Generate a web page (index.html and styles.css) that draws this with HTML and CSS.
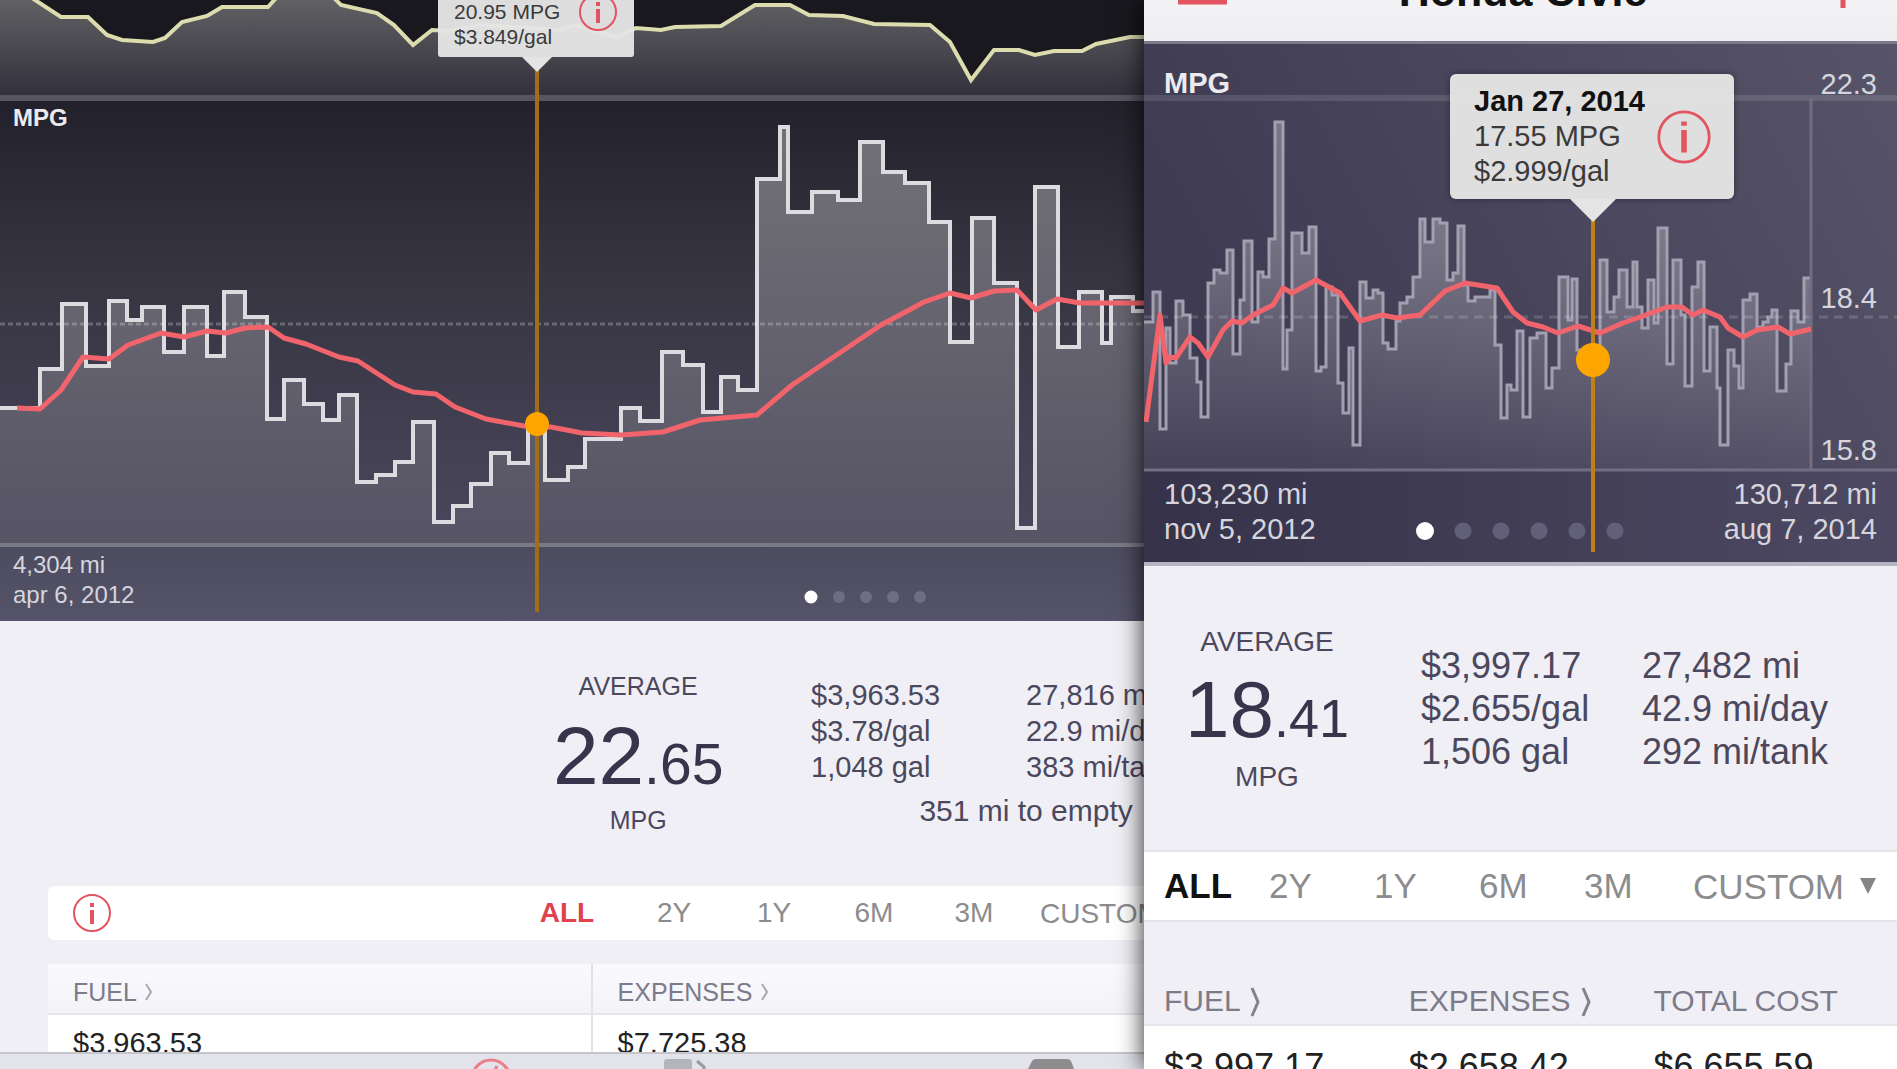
FILE: index.html
```html
<!DOCTYPE html>
<html lang="en">
<head>
    <meta charset="UTF-8">
    <meta name="viewport" content="width=device-width, initial-scale=1.0">
    <title>Fuel Log</title>
    <link rel="stylesheet" href="styles.css">
</head>
<body>

<!-- Tablet -->
<main class="panel tablet">
    <div class="content">
        <div class="chart">
            <svg viewBox="0 0 1144 621">
                <defs>
                    <linearGradient id="night" x1="0" y1="0" x2="0" y2="1">
                        <stop offset="0" stop-color="#22212b"/>
                        <stop offset="0.4" stop-color="#363541"/>
                        <stop offset="1" stop-color="#4a475d"/>
                    </linearGradient>
                    <linearGradient id="foot" x1="0" y1="0" x2="0" y2="1">
                        <stop offset="0" stop-color="#4d4b5e"/>
                        <stop offset="1" stop-color="#555369"/>
                    </linearGradient>
                    <linearGradient id="price" gradientUnits="userSpaceOnUse" x1="0" y1="0" x2="0" y2="96">
                        <stop offset="0" stop-color="#616064"/>
                        <stop offset="1" stop-color="#32313c"/>
                    </linearGradient>
                    <linearGradient id="mpg" gradientUnits="userSpaceOnUse" x1="0" y1="127" x2="0" y2="545">
                        <stop offset="0" stop-color="#727177"/>
                        <stop offset="1" stop-color="#565465"/>
                    </linearGradient>
                </defs>

                <!-- Price graph -->
                <rect width="1144" height="98" fill="#18181e"/>
                <path fill="url(#price)" d="M0,0 L34,0 61,17 88,17 107,35 122,40 153,42 165,38 182,22 207,16 222,7 268,7 275,0 335,0 341,5 377,13 394,25 413,45 432,30 450,31 480,25 560,30 575,25 617,37 636,28 661,30 675,27 721,26 755,5 790,5 809,15 843,16 874,24 930,25 950,42 971,80 994,50 1019,50 1035,55 1054,51 1082,51 1096,44 1130,37 1144,37 V98 H0 Z"/>
                <path class="line price" d="M32,-2 L61,17 88,17 107,35 122,40 153,42 165,38 182,22 207,16 222,7 268,7 277,-3"/>
                <path class="line price" d="M333,-3 L341,5 377,13 394,25 413,45 432,30 450,31 480,25 560,30 575,25 617,37 636,28 661,30 675,27 721,26 755,5 790,5 809,15 843,16 874,24 930,25 950,42 971,80 994,50 1019,50 1035,55 1054,51 1082,51 1096,44 1130,37 1144,37"/>

                <!-- MPG graph -->
                <rect y="98" width="1144" height="448" fill="url(#night)"/>
                <rect y="546" width="1144" height="75" fill="url(#foot)"/>
                <rect y="95" width="1144" height="6" fill="#565561"/>
                <path fill="url(#mpg)" d="M0,545 V408 H40 V369 H62 V304 H86 V366 H109 V301 H127 V320 H142 V307 H164 V352 H184 V307 H207 V356 H224 V292 H245 V317 H267 V419 H284 V380 H304 V404 H323 V420 H339 V395 H357 V482 H376 V475 H395 V462 H413 V422 H434 V522 H453 V506 H471 V484 H491 V453 H509 V463 H528 V426 H545 V480 H568 V467 H585 V439 H621 V408 H640 V421 H662 V352 H683 V365 H703 V412 H721 V377 H738 V390 H757 V179 H780 V127 H788 V212 H812 V192 H838 V200 H860 V142 H883 V172 H905 V183 H929 V222 H950 V342 H972 V218 H994 V283 H1017 V528 H1035 V187 H1058 V347 H1079 V292 H1102 V343 H1111 V297 H1133 V311 H1146 V545 Z"/>
                <path class="line steps" d="M-4,408 H40 V369 H62 V304 H86 V366 H109 V301 H127 V320 H142 V307 H164 V352 H184 V307 H207 V356 H224 V292 H245 V317 H267 V419 H284 V380 H304 V404 H323 V420 H339 V395 H357 V482 H376 V475 H395 V462 H413 V422 H434 V522 H453 V506 H471 V484 H491 V453 H509 V463 H528 V426 H545 V480 H568 V467 H585 V439 H621 V408 H640 V421 H662 V352 H683 V365 H703 V412 H721 V377 H738 V390 H757 V179 H780 V127 H788 V212 H812 V192 H838 V200 H860 V142 H883 V172 H905 V183 H929 V222 H950 V342 H972 V218 H994 V283 H1017 V528 H1035 V187 H1058 V347 H1079 V292 H1102 V343 H1111 V297 H1133 V311 H1146"/>
                <path class="dashed" stroke-dasharray="5 3" d="M0,324 H1144"/>
                <rect y="543" width="1144" height="4" fill="#7b7a87"/>
                <path class="line trend" d="M17,408 L40,409 61,390 83,357 109,359 128,345 161,333 184,337 207,331 226,333 245,328 268,327 284,338 306,344 339,357 358,361 395,385 413,392 436,394 455,407 486,419 524,426 551,427 582,433 621,435 663,432 700,420 757,415 792,385 881,325 924,302 950,293 971,298 994,291 1017,290 1036,310 1057,299 1080,303 1144,303"/>

                <!-- Cursor -->
                <path class="cursor" d="M537,70 V612"/>
                <circle class="marker" cx="537" cy="424" r="12"/>

                <text class="label small bold" x="13" y="126">MPG</text>
                <text class="label small" x="13" y="573">4,304 mi</text>
                <text class="label small" x="13" y="603">apr 6, 2012</text>

                <!-- Page dots -->
                <circle class="dot on" cx="811" cy="597" r="6.5"/>
                <circle class="dot" cx="839" cy="597" r="6"/>
                <circle class="dot" cx="866" cy="597" r="6"/>
                <circle class="dot" cx="893" cy="597" r="6"/>
                <circle class="dot" cx="920" cy="597" r="6"/>
            </svg>
            <div class="tooltip">
                <div>20.95 MPG<br>$3.849/gal</div>
                <button class="info" aria-label="Details">
                    <svg viewBox="0 0 40 40"><circle cx="20" cy="20" r="18"/><path d="M20,10 v4 M20,17 v14"/></svg>
                </button>
            </div>
        </div>

        <section class="stats">
            <div class="average">
                <span>AVERAGE</span>
                <strong>22<small>.65</small></strong>
                <span>MPG</span>
            </div>
            <div class="figures">
                <span>$3,963.53</span><span>27,816 mi</span>
                <span>$3.78/gal</span><span>22.9 mi/day</span>
                <span>1,048 gal</span><span>383 mi/tank</span>
                <p>351 mi to empty</p>
            </div>
        </section>

        <div class="range">
            <button class="info" aria-label="Info">
                <svg viewBox="0 0 40 40"><circle cx="20" cy="20" r="18"/><path d="M20,10 v4 M20,17 v14"/></svg>
            </button>
            <button class="active">ALL</button>
            <button>2Y</button>
            <button>1Y</button>
            <button>6M</button>
            <button>3M</button>
            <select aria-label="Custom range"><option>CUSTOM</option></select>
        </div>

        <table class="costs">
            <thead>
                <tr>
                    <th>FUEL <svg class="chevron" viewBox="0 0 8 18"><path d="M1,1 L6,9 1,17"/></svg></th>
                    <th>EXPENSES <svg class="chevron" viewBox="0 0 8 18"><path d="M1,1 L6,9 1,17"/></svg></th>
                </tr>
            </thead>
            <tbody>
                <tr><td>$3,963.53</td><td>$7,725.38</td></tr>
            </tbody>
        </table>
    </div>

    <nav class="tabs">
        <svg viewBox="0 0 1144 15">
            <!-- Gauge -->
            <circle cx="491" cy="25" r="19" fill="none" stroke="#ec7f88" stroke-width="3"/>
            <path d="M491,25 L497,12" fill="none" stroke="#ec7f88" stroke-width="3"/>
            <!-- Pump -->
            <path d="M664,15 V8 Q664,5 667,5 H689 Q692,5 692,8 V15 Z" fill="#b4b4bb"/>
            <path d="M697,7 L704,13 V18" fill="none" stroke="#9a9aa2" stroke-width="3"/>
            <!-- Car -->
            <path d="M1028,15 L1032,7 Q1033,5 1036,5 H1067 Q1070,5 1071,7 L1074,15 Z" fill="#8d8d90"/>
        </svg>
    </nav>
</main>

<!-- Phone -->
<aside class="panel phone">
    <header class="title-bar">
        <button aria-label="Menu">
            <svg viewBox="0 0 49 27" width="49" height="27"><path d="M0,2 H49 M0,13 H49 M0,24 H49"/></svg>
        </button>
        <h1>Honda Civic</h1>
        <button aria-label="Add">
            <svg viewBox="0 0 49 34" width="49" height="34"><path d="M24,0 V34 M7,17 H41"/></svg>
        </button>
    </header>

    <div class="chart">
        <svg viewBox="0 44 753 518">
            <defs>
                <linearGradient id="dusk" x1="0" y1="0.3" x2="1" y2="0">
                    <stop offset="0" stop-color="#3e3b52"/>
                    <stop offset="1" stop-color="#575369"/>
                </linearGradient>
                <linearGradient id="duskFoot" x1="0" y1="0" x2="1" y2="0">
                    <stop offset="0" stop-color="#353249"/>
                    <stop offset="1" stop-color="#4d4962"/>
                </linearGradient>
                <linearGradient id="fill" gradientUnits="userSpaceOnUse" x1="0" y1="220" x2="0" y2="470">
                    <stop offset="0" stop-color="#fff" stop-opacity="0.28"/>
                    <stop offset="1" stop-color="#fff" stop-opacity="0.04"/>
                </linearGradient>
            </defs>
            <rect y="44" width="753" height="427" fill="url(#dusk)"/>
            <rect y="471" width="753" height="91" fill="url(#duskFoot)"/>
            <rect y="95" width="753" height="6" fill="#fff" opacity="0.12"/>

            <path fill="url(#fill)" d="M0,470 V322 H9 V292 H16 V429 H22 V328 H26 V363 H32 V301 H39 V315 H46 V358 H53 V382 H57 V417 H64 V283 H70 V270 H76 V273 H83 V250 H89 V354 H96 V300 H100 V241 H108 V322 H114 V272 H119 V277 H125 V239 H131 V122 H139 V369 H143 V330 H148 V233 H158 V253 H165 V227 H172 V371 H177 V367 H182 V287 H188 V295 H194 V383 H199 V413 H205 V348 H209 V445 H216 V282 H222 V298 H229 V290 H234 V293 H239 V343 H244 V349 H252 V321 H256 V303 H263 V297 H269 V277 H276 V219 H281 V242 H289 V219 H296 V223 H303 V280 H309 V273 H314 V226 H320 V285 H324 V301 H331 V297 H346 V290 H351 V345 H357 V418 H363 V385 H367 V390 H373 V331 H379 V417 H386 V338 H393 V333 H402 V388 H408 V368 H415 V277 H424 V320 H428 V279 H433 V350 H456 V260 H463 V312 H470 V297 H475 V270 H483 V307 H489 V262 H493 V307 H498 V328 H504 V280 H510 V323 H514 V228 H523 V364 H529 V260 H537 V315 H541 V386 H548 V287 H554 V262 H560 V371 H566 V327 H573 V388 H576 V445 H584 V350 H590 V366 H595 V388 H599 V300 H606 V294 H613 V327 H619 V322 H624 V317 H628 V310 H633 V391 H642 V364 H647 V311 H654 V322 H660 V278 H667 V470 Z"/>
            <path class="line steps" d="M0,322 H9 V292 H16 V429 H22 V328 H26 V363 H32 V301 H39 V315 H46 V358 H53 V382 H57 V417 H64 V283 H70 V270 H76 V273 H83 V250 H89 V354 H96 V300 H100 V241 H108 V322 H114 V272 H119 V277 H125 V239 H131 V122 H139 V369 H143 V330 H148 V233 H158 V253 H165 V227 H172 V371 H177 V367 H182 V287 H188 V295 H194 V383 H199 V413 H205 V348 H209 V445 H216 V282 H222 V298 H229 V290 H234 V293 H239 V343 H244 V349 H252 V321 H256 V303 H263 V297 H269 V277 H276 V219 H281 V242 H289 V219 H296 V223 H303 V280 H309 V273 H314 V226 H320 V285 H324 V301 H331 V297 H346 V290 H351 V345 H357 V418 H363 V385 H367 V390 H373 V331 H379 V417 H386 V338 H393 V333 H402 V388 H408 V368 H415 V277 H424 V320 H428 V279 H433 V350 H456 V260 H463 V312 H470 V297 H475 V270 H483 V307 H489 V262 H493 V307 H498 V328 H504 V280 H510 V323 H514 V228 H523 V364 H529 V260 H537 V315 H541 V386 H548 V287 H554 V262 H560 V371 H566 V327 H573 V388 H576 V445 H584 V350 H590 V366 H595 V388 H599 V300 H606 V294 H613 V327 H619 V322 H624 V317 H628 V310 H633 V391 H642 V364 H647 V311 H654 V322 H660 V278 H667"/>
            <path class="dashed" stroke-dasharray="9 6" d="M0,317 H753"/>
            <path class="axis" d="M0,470 H753 M667,98 V470"/>
            <path class="line trend" d="M2,422 L16,315 22,363 26,357 32,358 46,337 54,343 64,357 79,330 88,321 98,323 109,315 129,305 139,288 148,293 172,280 196,293 216,321 238,315 253,318 276,315 301,291 321,283 353,288 369,312 383,323 399,327 414,333 434,326 456,333 479,323 499,316 523,307 538,307 549,315 559,310 576,317 584,328 599,337 613,330 634,327 646,334 667,329"/>

            <text class="label bold" x="20" y="93">MPG</text>
            <text class="label" x="733" y="94" text-anchor="end">22.3</text>
            <text class="label" x="733" y="308" text-anchor="end">18.4</text>
            <text class="label" x="733" y="460" text-anchor="end">15.8</text>
            <text class="label" x="20" y="504">103,230 mi</text>
            <text class="label" x="20" y="539">nov 5, 2012</text>
            <text class="label" x="733" y="504" text-anchor="end">130,712 mi</text>
            <text class="label" x="733" y="539" text-anchor="end">aug 7, 2014</text>

            <!-- Page dots -->
            <circle class="dot on" cx="281" cy="531" r="9"/>
            <circle class="dot" cx="319" cy="531" r="8.5"/>
            <circle class="dot" cx="357" cy="531" r="8.5"/>
            <circle class="dot" cx="395" cy="531" r="8.5"/>
            <circle class="dot" cx="433" cy="531" r="8.5"/>
            <circle class="dot" cx="471" cy="531" r="8.5"/>

            <!-- Cursor -->
            <path class="cursor" d="M449,220 V552"/>
            <circle class="marker" cx="449" cy="360" r="17"/>
        </svg>
        <div class="tooltip">
            <div><b>Jan 27, 2014</b><br>17.55 MPG<br>$2.999/gal</div>
            <button class="info" aria-label="Details">
                <svg viewBox="0 0 40 40"><circle cx="20" cy="20" r="18"/><path d="M20,9 v3 M20,15 v16"/></svg>
            </button>
        </div>
    </div>

    <section class="stats">
        <div class="average">
            <span>AVERAGE</span>
            <strong>18<small>.41</small></strong>
            <span>MPG</span>
        </div>
        <div class="figures">
            <span>$3,997.17</span><span>27,482 mi</span>
            <span>$2.655/gal</span><span>42.9 mi/day</span>
            <span>1,506 gal</span><span>292 mi/tank</span>
        </div>
    </section>

    <div class="range">
        <button class="active">ALL</button>
        <button>2Y</button>
        <button>1Y</button>
        <button>6M</button>
        <button>3M</button>
        <select aria-label="Custom range"><option>CUSTOM</option></select>
        <svg class="arrow" viewBox="0 0 18 18"><path d="M1,1 H17 L9,17 Z"/></svg>
    </div>

    <table class="costs">
        <thead>
            <tr>
                <th>FUEL <svg class="chevron" viewBox="0 0 11 30"><path d="M2,1 L8,15 2,29"/></svg></th>
                <th>EXPENSES <svg class="chevron" viewBox="0 0 11 30"><path d="M2,1 L8,15 2,29"/></svg></th>
                <th>TOTAL COST</th>
            </tr>
        </thead>
        <tbody>
            <tr><td>$3,997.17</td><td>$2,658.42</td><td>$6,655.59</td></tr>
        </tbody>
    </table>
</aside>

</body>
</html>
```

FILE: styles.css
```css
* {
    box-sizing: border-box;
}
body {
    display: flex;
    height: 100vh;
    margin: 0;
    overflow: hidden;
    font-family: "Liberation Sans", Arial, sans-serif;
    color: #4b485d;
    background-color: #f0eff5;
}
button, select {
    appearance: none;
    padding: 0;
    border: 0;
    background: none;
    font: inherit;
    color: inherit;
    cursor: pointer;
}
.panel {
    min-width: 0;
    overflow: hidden;
    background-color: #f0eff5;
}
.tablet {
    flex: 1144 1 0;
    display: flex;
    flex-direction: column;
}
.phone {
    flex: 753 1 0;
    position: relative;
    overflow: visible;
    box-shadow: 0 0 24px rgba(0, 0, 0, 0.85);
}
.content {
    flex: 1;
    min-height: 0;
    overflow: hidden;
}

/* Charts */
.chart {
    position: relative;
}
.chart > svg {
    display: block;
    width: 100%;
}
.line {
    fill: none;
    stroke-width: 4;
}
.price {
    stroke: #dcdcae;
}
.steps {
    stroke: #dcdce0;
}
.phone .steps {
    stroke: #a19fb0;
    stroke-width: 3;
}
.trend {
    stroke: #f2646c;
    stroke-width: 5;
    stroke-linejoin: round;
}
.dashed {
    stroke: rgba(255, 255, 255, 0.24);
    stroke-width: 3;
}
.phone .dashed {
    stroke: rgba(255, 255, 255, 0.16);
}
.axis {
    fill: none;
    stroke: #716e84;
    stroke-width: 3;
}
.cursor {
    stroke: #a06d18;
    stroke-width: 4;
}
.phone .cursor {
    stroke: #c08018;
}
.marker {
    fill: #ffa500;
}
.label {
    font-size: 29px;
    fill: #d6d5de;
}
.small {
    font-size: 24px;
}
.bold {
    font-weight: bold;
    fill: #ebebef;
}
.dot {
    fill: #6f6d83;
}
.phone .dot {
    fill: #625f78;
}
.dot.on, .phone .dot.on {
    fill: #fff;
}

/* Tooltip */
.tooltip {
    position: absolute;
    top: -12px;
    left: 438px;
    display: flex;
    justify-content: space-between;
    width: 196px;
    padding: 11px 16px 8px;
    border-radius: 3px;
    background-color: rgba(228, 228, 228, 0.97);
    font-size: 21px;
    line-height: 25px;
    color: #3a3a3a;
}
.tooltip::after {
    content: "";
    position: absolute;
    top: 100%;
    left: 84px;
    border: 15px solid transparent;
    border-top-color: #e4e4e4;
    border-bottom: 0;
}
.phone .tooltip {
    top: 30px;
    left: 306px;
    align-items: center;
    width: 284px;
    padding: 10px 24px;
    border-radius: 6px;
    font-size: 29px;
    line-height: 35px;
    box-shadow: 0 0 6px rgba(0, 0, 0, 0.4);
}
.phone .tooltip::after {
    left: 120px;
    border-width: 23px 23px 0;
}
.tooltip b {
    color: #111;
}
.info {
    flex: none;
    width: 40px;
    height: 40px;
}
.info svg {
    display: block;
    fill: none;
    stroke: #e25560;
    stroke-width: 2;
}
.info path {
    stroke-width: 4;
}
.tooltip .info {
    margin-top: -7px;
}
.phone .tooltip .info {
    width: 56px;
    height: 56px;
    margin: 0 -2px 0 0;
}

/* Title bar */
.title-bar {
    display: flex;
    justify-content: space-between;
    align-items: center;
    height: 103px;
    margin-top: -59px;
    padding: 0 29px 0 34px;
    border-bottom: 3px solid #7b798a;
    background: linear-gradient(#fafafa, #eeeef1);
    color: #111;
}
.title-bar h1 {
    margin: 0;
    font-size: 43px;
    line-height: 44px;
}
.title-bar svg {
    display: block;
    fill: none;
    stroke: #e25560;
    stroke-width: 5;
}

/* Stats */
.stats {
    display: flex;
    gap: 84px;
    height: 265px;
    padding: 50px 0 0 48%;
    white-space: nowrap;
}
.average {
    flex: 0 0 178px;
    text-align: center;
    font-size: 25px;
    line-height: 30px;
}
.average span {
    display: block;
}
.average strong {
    display: block;
    margin: 10px 0 4px;
    font-size: 82px;
    font-weight: normal;
    line-height: 90px;
    color: #37344c;
}
.average small {
    font-size: 57px;
    line-height: 1;
}
.figures {
    flex: none;
    display: grid;
    grid-template-columns: 215px 215px;
    align-content: start;
    padding-top: 6px;
    font-size: 29px;
    line-height: 36px;
}
.figures p {
    grid-column: 1 / 3;
    margin: 8px 0 0;
    font-size: 30px;
    text-align: center;
}
.phone .stats {
    gap: 65px;
    height: 288px;
    padding: 59px 0 0 34px;
    border-top: 4px solid #b5b4c1;
}
.phone .average {
    font-size: 28px;
    line-height: 34px;
}
.phone .average strong {
    margin: 6px 0 5px;
    font-size: 80px;
    line-height: 90px;
}
.phone .average small {
    font-size: 54px;
    line-height: 1;
}
.phone .figures {
    grid-template-columns: 221px auto;
    padding-top: 19px;
    font-size: 36px;
    line-height: 43px;
}

/* Range */
.range {
    display: flex;
    align-items: center;
    height: 54px;
    margin: 0 0 24px 48px;
    padding-left: 24px;
    border-radius: 6px 0 0 6px;
    background-color: #fff;
    font-size: 28px;
    color: #8c8c8e;
}
.range button {
    flex: 0 0 100px;
}
.range .info {
    flex: 0 0 40px;
    margin-right: auto;
}
.range .active {
    flex-basis: 114px;
    font-weight: bold;
    color: #e0434e;
}
.range select {
    flex: 0 0 120px;
    margin: 0 -17px 0 16px;
}
.phone .range {
    height: 72px;
    margin: 0;
    padding: 0 20px;
    border: solid #e6e5ea;
    border-width: 2px 0;
    border-radius: 0;
    font-size: 35px;
}
.phone .range button {
    flex: 0 0 105px;
    text-align: left;
}
.phone .range .active {
    color: #111;
}
.phone .range select {
    flex: none;
    margin: 0 auto 0 4px;
}
.arrow {
    width: 18px;
    fill: #858587;
}

/* Costs */
.costs {
    width: calc(100% - 48px);
    margin-left: 48px;
    border-collapse: collapse;
    table-layout: fixed;
    text-align: left;
    background-color: #fff;
}
.costs th {
    padding: 13px 0 6px 25px;
    border-bottom: 2px solid #e6e5ec;
    background: linear-gradient(#f9f9fe, #f3f3f8);
    font-size: 25px;
    font-weight: normal;
    line-height: 30px;
    color: #7c7b8a;
}
.costs th:first-child {
    width: 49.6%;
}
.costs th + th, .costs td + td {
    border-left: 2px solid #e2e1e8;
}
.costs td {
    padding: 10px 0 10px 25px;
    font-size: 29px;
    line-height: 36px;
    color: #222;
}
.chevron {
    width: 8px;
    height: 18px;
    margin-left: 2px;
    fill: none;
    stroke: #a9a8b4;
    stroke-width: 2;
}
.phone .costs {
    width: 100%;
    margin: 0;
}
.phone .costs th {
    width: 32.5%;
    padding: 61px 0 5px 20px;
    background: #f0eff5;
    font-size: 30px;
    line-height: 36px;
}
.phone .costs th:last-child {
    width: 35%;
}
.phone .costs th + th, .phone .costs td + td {
    border-left: 0;
}
.phone .costs td {
    padding: 19px 0 0 20px;
    font-size: 36px;
    line-height: 43px;
}
.phone .chevron {
    width: 11px;
    height: 30px;
    vertical-align: -6px;
    stroke: #82818f;
    stroke-width: 3;
}

/* Tab bar */
.tabs {
    flex: none;
    border-top: 2px solid #c5c5cc;
    background-color: #e3e3ec;
}
.tabs svg {
    display: block;
    width: 100%;
}
```
